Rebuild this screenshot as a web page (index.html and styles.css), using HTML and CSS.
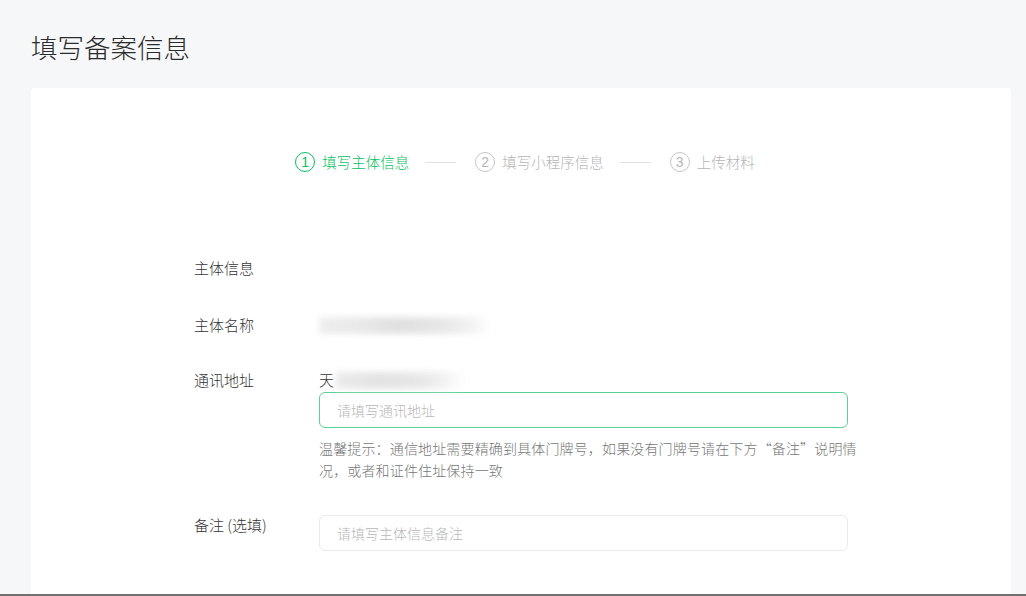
FILE: index.html
```html
<!DOCTYPE html>
<html lang="zh-CN">
<head>
<meta charset="utf-8">
<title>填写备案信息</title>
<link rel="stylesheet" href="styles.css">
</head>
<body>
<div class="page">
  <header class="page-head">
    <h1 class="page-title">填写备案信息</h1>
  </header>
  <main class="card">
    <div class="steps">
      <div class="step step-active"><span class="step-num">1</span><span class="step-text">填写主体信息</span></div>
      <span class="step-line"></span>
      <div class="step"><span class="step-num">2</span><span class="step-text">填写小程序信息</span></div>
      <span class="step-line"></span>
      <div class="step"><span class="step-num">3</span><span class="step-text">上传材料</span></div>
    </div>

    <section class="form">
      <div class="form-section-title">主体信息</div>

      <div class="form-row row-name">
        <div class="form-label">主体名称</div>
        <div class="form-value">
          <div class="value-line"><span class="blur blur-name"></span></div>
        </div>
      </div>

      <div class="form-row row-address">
        <div class="form-label">通讯地址</div>
        <div class="form-value">
          <div class="value-line"><span class="value-text">天</span><span class="blur blur-addr"></span></div>
          <div class="input input-focus"><span class="placeholder">请填写通讯地址</span></div>
          <p class="hint">温馨提示：通信地址需要精确到具体门牌号，如果没有门牌号请在下方“备注”说明情况，或者和证件住址保持一致</p>
        </div>
      </div>

      <div class="form-row row-remark">
        <div class="form-label">备注 (选填)</div>
        <div class="form-value">
          <div class="input"><span class="placeholder">请填写主体信息备注</span></div>
        </div>
      </div>
    </section>
  </main>
  <div class="bottom-bar"></div>
</div>
</body>
</html>
```
FILE: styles.css
```css
* { box-sizing: border-box; }
html, body { margin: 0; padding: 0; }
body {
  background: #f6f7f9;
  font-family: "Noto Sans CJK SC", "Noto Sans", sans-serif;
  font-weight: 300;
  color: #353535;
}
.page {
  height: 596px;
  display: flex;
  flex-direction: column;
  overflow: hidden;
}
.page-head {
  padding: 30px 0 24px 31px;
}
.page-title {
  margin: 0;
  font-size: 26.5px;
  line-height: 34px;
  font-weight: 300;
  color: #2b2b2b;
}
.card {
  flex: 1;
  margin: 0 15px 0 31px;
  background: #fff;
  border-radius: 4px 4px 0 0;
  padding-top: 64px;
  overflow: hidden;
}
.steps {
  display: flex;
  justify-content: center;
  align-items: center;
  height: 20px;
  padding-left: 8px;
}
.step {
  display: flex;
  align-items: center;
  color: #b5b5b5;
  font-size: 14.5px;
}
.step-num {
  width: 20px;
  height: 20px;
  border: 1px solid #c6c6c6;
  border-radius: 50%;
  display: flex;
  align-items: center;
  justify-content: center;
  font-size: 14px;
  line-height: 1;
  font-family: "Liberation Sans", "Noto Sans", sans-serif;
  font-weight: 400;
  margin-right: 7px;
}
.step-text { line-height: 20px; }
.step-active { color: #07c160; }
.step-active .step-num { border-color: #07c160; }
.step-line {
  width: 31px;
  height: 1px;
  background: #e2e2e2;
  margin: 0 19px 0 16px;
}
.form {
  width: 654px;
  margin: 86px auto 0;
  font-size: 15px;
}
.form-section-title {
  line-height: 20px;
  color: #353535;
}
.form-row {
  display: flex;
}
.row-name { margin-top: 37px; }
.row-address { margin-top: 35px; }
.row-remark { margin-top: 34px; }
.form-label {
  width: 125px;
  flex: none;
  line-height: 20px;
}
.form-value {
  flex: 1;
  min-width: 0;
}
.value-line {
  display: flex;
  align-items: center;
  height: 20px;
}
.value-text { line-height: 20px; color: #353535; }
.blur {
  display: block;
  height: 17px;
  filter: blur(3px);
}
.blur-name {
  width: 172px;
  background: linear-gradient(90deg, #eeeeee 0%, #e8e8e8 25%, #e0e0e0 45%, #e6e6e6 70%, #f2f2f2 88%, rgba(255,255,255,0) 100%);
}
.blur-addr {
  width: 128px;
  margin-left: 2px;
  background: linear-gradient(90deg, #ebebeb 0%, #e3e3e3 35%, #e7e7e7 65%, #f2f2f2 85%, rgba(255,255,255,0) 100%);
}
.input {
  height: 36px;
  border: 1px solid #ebebeb;
  border-radius: 6px;
  padding: 0 17px;
  display: flex;
  align-items: center;
  background: #fff;
}
.row-address .input { margin-top: 2px; }
.input-focus { border-color: #5cd095; }
.placeholder {
  font-size: 14px;
  color: #b8b8b8;
}
.hint {
  margin: 9px 0 0;
  font-size: 14px;
  letter-spacing: 0.15px;
  line-height: 22px;
  color: #777;
  width: 545px;
}
.bottom-bar {
  height: 2px;
  background: #707070;
  flex: none;
}
```
